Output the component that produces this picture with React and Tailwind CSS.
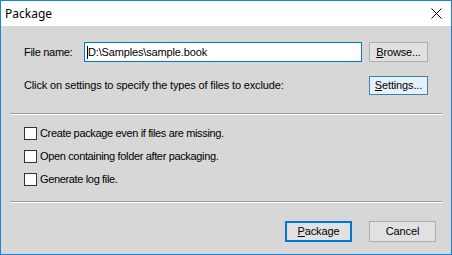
import React from 'react';

const ui = { fontFamily: '"Liberation Sans", Arial, sans-serif' };
const title = { fontFamily: '"Noto Sans", "Open Sans", sans-serif' };

const Checkbox = ({ label }) => (
  <label className="flex h-[23px] items-center">
    <span className="h-[13px] w-[13px] border border-[#333333] bg-white" />
    <span className="ml-[3px] tracking-[-0.35px]">{label}</span>
  </label>
);

const Separator = () => (
  <div className="ml-[9px] w-[432px]">
    <div className="h-px bg-[#a0a0a0]" />
    <div className="h-px bg-white" />
  </div>
);

const App = () => {
  return (
    <div className="flex h-[255px] w-[452px] flex-col border border-[#1883d7] bg-[#d7d7d7] text-[11px] tracking-[-0.15px] text-black" style={ui}>
      {/* Title bar */}
      <div className="flex h-[25px] items-center justify-between bg-white pl-[4px] pr-[9px]">
        <span className="text-[12px] tracking-normal" style={title}>Package</span>
        <svg width="11" height="11" viewBox="0 0 11 11">
          <path d="M0.5 0.5 L10.5 10.5 M10.5 0.5 L0.5 10.5" stroke="#000" strokeWidth="1" />
        </svg>
      </div>

      {/* File name row */}
      <div className="mt-[16px] flex items-center pl-[23px]">
        <span className="w-[60px] tracking-[-0.3px]">File name:</span>
        <div className="flex h-[20px] w-[278px] items-center border border-[#0078d7] bg-white pl-[2px]">
          <span className="h-[13px] w-px bg-black" />
          <span>D:\Samples\sample.book</span>
        </div>
        <button className="ml-[7px] h-[20px] w-[59px] border border-[#adadad] bg-[#e1e1e1]">
          <u>B</u>rowse...
        </button>
      </div>

      {/* Settings row */}
      <div className="mt-[14px] flex items-center justify-between pl-[23px] pr-[23px]">
        <span>Click on settings to specify the types of files to exclude:</span>
        <button className="h-[19px] w-[59px] border border-[#3c7fb1] bg-[#e5f1fb]">
          <u>S</u>ettings...
        </button>
      </div>

      <div className="mt-[18px]">
        <Separator />
      </div>

      <div className="mt-[7px] flex flex-col pl-[23px]">
        <Checkbox label="Create package even if files are missing." />
        <Checkbox label="Open containing folder after packaging." />
        <Checkbox label="Generate log file." />
      </div>

      <div className="mt-[10px]">
        <Separator />
      </div>

      <div className="mt-[18px] flex justify-end gap-[17px] pr-[15px]">
        <button className="h-[21px] w-[67px] border-2 border-[#0078d7] bg-[#e1e1e1]">
          <u>P</u>ackage
        </button>
        <button className="h-[21px] w-[67px] border border-[#adadad] bg-[#e1e1e1]">
          Cancel
        </button>
      </div>
    </div>
  );
};

export default App;
